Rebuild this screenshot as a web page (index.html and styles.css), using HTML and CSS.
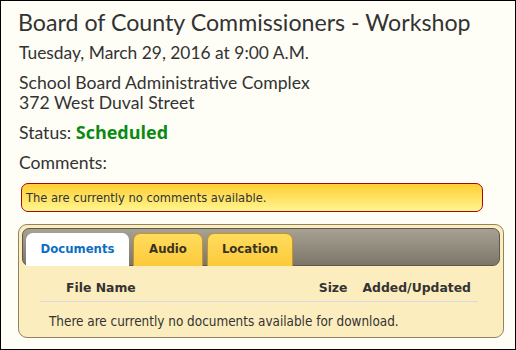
FILE: index.html
```html
<!DOCTYPE html>
<html>
<head>
<meta charset="utf-8">
<link rel="stylesheet" href="styles.css">
</head>
<body>
<div class="frame">
  <h1 class="title">Board of County Commissioners - Workshop</h1>
  <p class="date">Tuesday, March 29, 2016 at 9:00 A.M.</p>
  <p class="address">School Board Administrative Complex<br>372 West Duval Street</p>
  <p class="status">Status: <span class="scheduled">Scheduled</span></p>
  <p class="comments-label">Comments:</p>
  <div class="notice">The are currently no comments available.</div>
  <div class="tabs">
    <div class="tabbar">
      <div class="tab active tab-docs">Documents</div>
      <div class="tab tab-audio">Audio</div>
      <div class="tab tab-loc">Location</div>
    </div>
    <div class="panel">
      <div class="thead">
        <span class="col-name">File Name</span>
        <span class="col-size">Size</span>
        <span class="col-date">Added/Updated</span>
      </div>
      <div class="empty">There are currently no documents available for download.</div>
    </div>
  </div>
</div>
</body>
</html>
```
FILE: styles.css
```css
html, body {
  margin: 0;
  padding: 0;
}
body {
  width: 516px;
  height: 350px;
  overflow: hidden;
}
.frame {
  box-sizing: border-box;
  width: 516px;
  height: 350px;
  border: 1px solid #000;
  background: #fefef7;
  padding: 6px 11px 0 17px;
  font-family: "Lato", "Open Sans", sans-serif;
  color: #333;
}
.title {
  margin: 0;
  font-weight: normal;
  font-size: 23.2px;
  line-height: 30px;
  white-space: nowrap;
}
.date {
  margin: 4px 0 0 1px;
  font-size: 17.4px;
  line-height: 24px;
}
.address {
  margin: 8px 0 0 1px;
  font-size: 17.6px;
  line-height: 20px;
}
.status {
  margin: 8px 0 0 1px;
  height: 24px;
  font-size: 17.6px;
  line-height: 24px;
}
.scheduled {
  color: #0a8a12;
  font-family: "Open Sans", "Lato", sans-serif;
  font-weight: bold;
  font-size: 18px;
  line-height: 16px;
}
.comments-label {
  margin: 6px 0 0 1px;
  font-size: 17.6px;
  line-height: 24px;
}
.notice {
  margin: 8px 21px 0 3px;
  height: 29px;
  box-sizing: border-box;
  border: 1px solid #a8080a;
  border-radius: 7px;
  background: linear-gradient(#ffcf33, #fff590);
  font-family: "DejaVu Sans Condensed", "DejaVu Sans", sans-serif;
  font-size: 12.8px;
  line-height: 27px;
  padding-left: 4px;
  color: #333;
}
.tabs {
  margin: 12px 0 0 0;
  box-sizing: border-box;
  height: 114px;
  border: 1px solid #8f8360;
  border-radius: 9px;
  background: #fcedbe;
  padding: 3px;
  font-family: "DejaVu Sans Condensed", "DejaVu Sans", sans-serif;
}
.tabbar {
  display: flex;
  gap: 4px;
  height: 38px;
  box-sizing: border-box;
  padding: 4px 0 0 3px;
  border: 1px solid #5e594c;
  border-radius: 7px;
  background: linear-gradient(#a7a193, #7c7769);
  align-items: flex-end;
}
.tab {
  box-sizing: border-box;
  height: 33px;
  margin-bottom: -1px;
  border: 1px solid #c3952c;
  border-bottom: none;
  border-radius: 7px 7px 0 0;
  background: linear-gradient(#ffdc5e, #fcca3a);
  color: #3a3320;
  font-family: "DejaVu Sans", sans-serif;
  font-weight: bold;
  font-size: 11.7px;
  line-height: 31px;
  text-align: center;
}
.tab-docs { width: 103px; }
.tab-audio { width: 70px; }
.tab-loc { width: 86px; }
.tab.active {
  background: #fff;
  border-color: #fff;
  color: #0d6fc4;
}
.panel {
  padding: 9px 22px 0 18px;
}
.thead {
  display: flex;
  font-family: "DejaVu Sans", sans-serif;
  font-weight: bold;
  font-size: 12.4px;
  line-height: 26px;
  border-bottom: 1px solid #d9d9e6;
  padding-left: 26px;
  padding-right: 7px;
  color: #333;
}
.col-name {
  flex: 1;
}
.col-size {
  margin-right: 15px;
}
.empty {
  font-size: 13.4px;
  line-height: 20px;
  padding: 10px 0 0 9px;
  color: #333;
}
```
